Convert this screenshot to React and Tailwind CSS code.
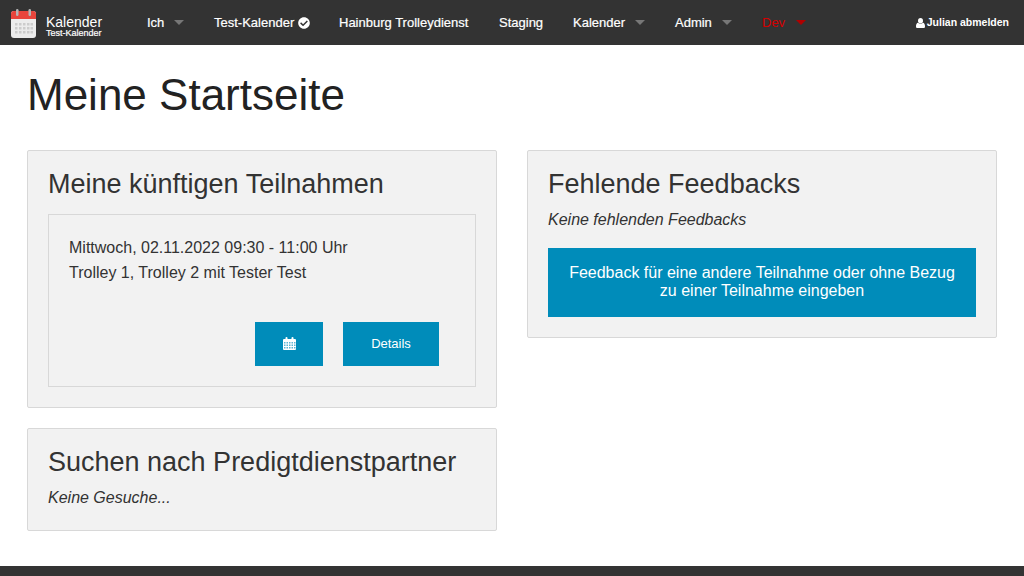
import { FaCheckCircle } from 'react-icons/fa';

const Caret = ({ red }) => (
  <span className={`${red ? 'ml-[11px] border-t-[#b00000]' : 'ml-[10px] border-t-[#777777]'} w-0 h-0 border-x-[5px] border-x-transparent border-t-[5px]`} />
);

const NavItem = ({ className = '', children }) => (
  <a className={`flex items-center font-normal text-[13px] [-webkit-text-stroke:0.2px_currentColor] ${className}`}>{children}</a>
);

const Logo = () => (
  <svg width="25" height="29" viewBox="0 0 25 29" className="shrink-0">
    <rect x="0" y="2" width="25" height="27" rx="3" fill="#ececec" />
    <path d="M0 10V5a3 3 0 0 1 3-3h19a3 3 0 0 1 3 3v5z" fill="#e8453c" />
    <rect x="5" y="0" width="2.5" height="7" rx="1.2" fill="#b5b5b5" />
    <rect x="17.5" y="0" width="2.5" height="7" rx="1.2" fill="#b5b5b5" />
    <g fill="#cccccc">
      {[14, 18, 22].map(y => [4, 8, 12, 16, 19.5].map(x => (
        <rect key={`${x}-${y}`} x={x} y={y} width="2.5" height="2.5" />
      )))}
    </g>
  </svg>
);

const UserIcon = () => (
  <svg width="9" height="10" viewBox="0 0 9 10" className="mr-[2px]" fill="currentColor">
    <ellipse cx="4.5" cy="2.7" rx="2.5" ry="2.7" />
    <path d="M0 8.4C0 6.4.7 5 2 4.8c.7.6 1.5.9 2.5.9s1.800-.3 2.500-.9C8.300 5 9 6.400 9 8.400 9 9.400 8.400 10 7.500 10h-6C.6 10 0 9.400 0 8.400z" />
  </svg>
);

const CalendarIcon = () => (
  <svg width="13" height="13" viewBox="0 0 13 13">
    <path d="M1 2h1.500V1a1 1 0 0 1 2 0v1h4V1a1 1 0 0 1 2 0v1H12a1 1 0 0 1 1 1v9a1 1 0 0 1-1 1H1a1 1 0 0 1-1-1V3a1 1 0 0 1 1-1z" fill="white" />
    <g fill="#5cb4d4">
      {[5, 7.5, 10].map(y => [1, 3.500, 6, 8.500, 11].map(x => (
        <rect key={`${x}-${y}`} x={x} y={y} width="1.500" height="1.500" />
      )))}
    </g>
  </svg>
);

const Panel = ({ title, children }) => (
  <div className="bg-[#f2f2f2] border border-[#d8d8d8] rounded-[2px] px-5 pt-[15px] pb-5">
    <h3 className="text-[27px] leading-[37px] text-[#333333] mb-[4px]">{title}</h3>
    {children}
  </div>
);

export default function App() {
  return (
    <div className="h-screen overflow-hidden flex flex-col bg-white font-['Liberation_Sans',Arial,sans-serif]">
      <nav className="h-[45px] shrink-0 bg-[#333333] text-white flex items-center">
        <div className="flex items-center ml-[11px] w-[136px] shrink-0 pt-[1px]">
          <Logo />
          <div className="ml-[10px] mt-[7px]">
            <div className="text-[14px] leading-[14px]">Kalender</div>
            <div className="text-[9px] leading-[9px] [-webkit-text-stroke:0.2px_currentColor]">Test-Kalender</div>
          </div>
        </div>
        <div className="flex h-full flex-1">
          <NavItem className="w-[67px]">Ich<Caret /></NavItem>
          <NavItem className="w-[125px]">Test-Kalender<FaCheckCircle className="ml-[4px] text-[12px]" /></NavItem>
          <NavItem className="w-[160px]">Hainburg Trolleydienst</NavItem>
          <NavItem className="w-[74px]">Staging</NavItem>
          <NavItem className="w-[102px]">Kalender<Caret /></NavItem>
          <NavItem className="w-[87px]">Admin<Caret /></NavItem>
          <NavItem className="text-[#d40000] [-webkit-text-stroke:0px]">Dev<Caret red /></NavItem>
        </div>
        <a className="flex items-center mr-[15px] text-[10.5px] font-bold">
          <UserIcon />Julian abmelden
        </a>
      </nav>

      <main className="flex-1 px-[27px]">
        <h1 className="text-[44px] leading-[62px] text-[#222222] mt-[19px] mb-[24px]">Meine Startseite</h1>
        <div className="grid grid-cols-2 gap-[30px] items-start">
          <div className="flex flex-col gap-5">
            <Panel title="Meine künftigen Teilnahmen">
              <div className="border border-[#d8d8d8] mt-[11px] px-5 pt-5 pb-5 text-[16px] leading-[25px] text-[#333333]">
                <p>Mittwoch, 02.11.2022 09:30 - 11:00 Uhr</p>
                <p>Trolley 1, Trolley 2 mit Tester Test</p>
                <div className="flex justify-end gap-5 mt-[37px] mr-4">
                  <button className="w-[68px] h-[44px] bg-[#008cba] text-white flex items-center justify-center pb-[1px]">
                    <CalendarIcon />
                  </button>
                  <button className="w-[96px] h-[44px] bg-[#008cba] text-white text-[13px] pb-[2px]">Details</button>
                </div>
              </div>
            </Panel>
            <Panel title="Suchen nach Predigtdienstpartner">
              <p className="italic text-[16px] leading-[25px] text-[#333333]">Keine Gesuche...</p>
            </Panel>
          </div>
          <Panel title="Fehlende Feedbacks">
            <p className="italic text-[16px] leading-[25px] text-[#333333]">Keine fehlenden Feedbacks</p>
            <button className="w-full mt-[16px] h-[69px] bg-[#008cba] text-white text-[16px] leading-[18px] px-5 pb-[1px]">
              Feedback für eine andere Teilnahme oder ohne Bezug zu einer Teilnahme eingeben
            </button>
          </Panel>
        </div>
      </main>

      <footer className="h-[10px] shrink-0 bg-[#333333]" />
    </div>
  );
}
